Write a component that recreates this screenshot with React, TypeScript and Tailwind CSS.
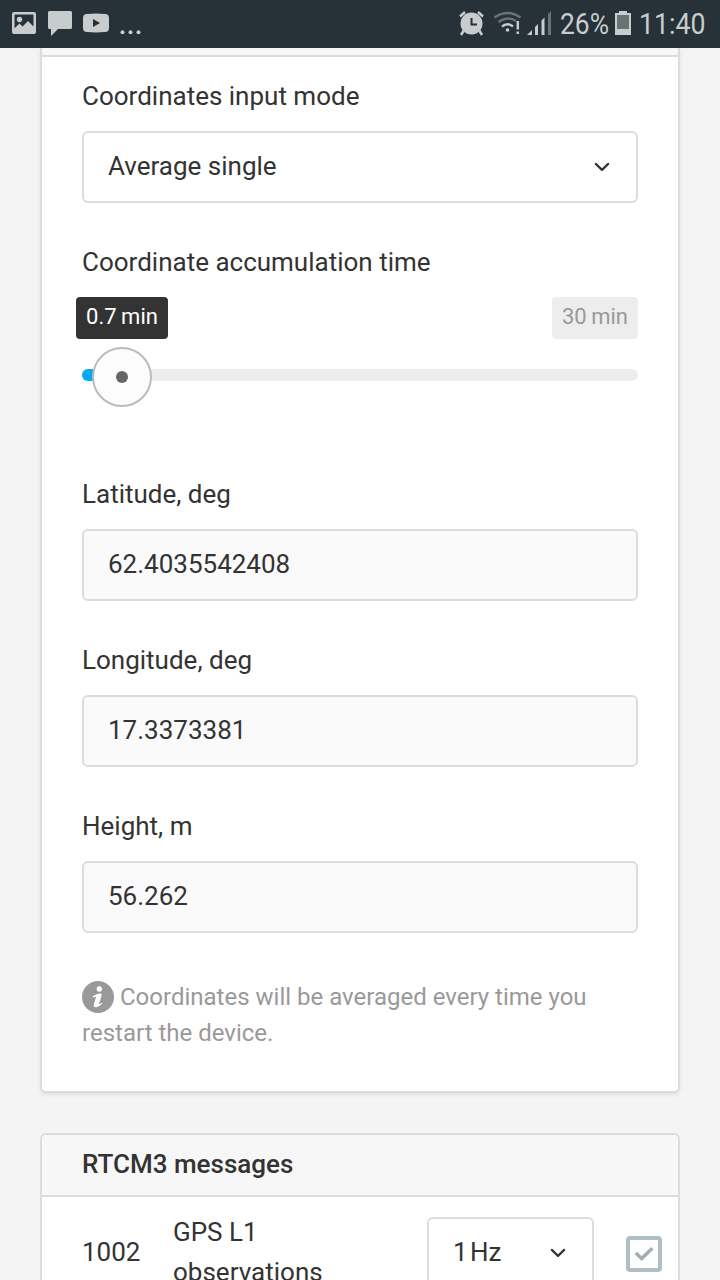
import type { ReactNode } from "react";

function Chevron() {
  return (
    <svg width="16" height="10" viewBox="0 0 16 10" fill="none" stroke="#333" strokeWidth="2.2" strokeLinecap="round" strokeLinejoin="round">
      <path d="M1.8 1.9 8 7.900l6.200-6" />
    </svg>
  );
}

function StatusBar() {
  return (
    <header className="flex h-12 shrink-0 items-center bg-[#263238] text-[#c8cccd]">
      <svg width="150" height="48" viewBox="0 0 150 48" fill="#c8cccd">
        <path fillRule="evenodd" d="M14 12h20a2 2 0 0 1 2 2v18a2 2 0 0 1-2 2H14a2 2 0 0 1-2-2V14a2 2 0 0 1 2-2Zm.5 2.500v13.800l5-4.800 3 3 5.500-5.500 5.500 5.500V14.500Z" />
        <circle cx="19.500" cy="19.500" r="2.700" />
        <path d="M49.500 11h21a1.500 1.500 0 0 1 1.500 1.500v15a1.500 1.500 0 0 1-1.500 1.500H58l-7 7v-7h-1.500a1.500 1.500 0 0 1-1.500-1.500v-15a1.500 1.500 0 0 1 1.500-1.500Z" />
        <path fillRule="evenodd" d="M87 14q9-.8 18 0 4 .2 4 4v10q0 3.800-4 4-9 .8-18 0-4-.2-4-4V18q0-3.800 4-4Zm6 5v8l7-4Z" />
        <circle cx="122.500" cy="32.300" r="2" />
        <circle cx="130.500" cy="32.300" r="2" />
        <circle cx="138.500" cy="32.300" r="2" />
      </svg>
      <svg className="ml-auto" width="100" height="48" viewBox="456 0 100 48" fill="none">
        <path d="m464 30-3 5M479 30l3 5M460 16.500l5-4.500M483 16.500l-5-4.500" stroke="#c8cccd" strokeWidth="2.500" />
        <circle cx="471.500" cy="23.500" r="11" fill="#c8cccd" />
        <path d="M471.500 18v6.500h5.500" stroke="#263238" strokeWidth="2" />
        <g strokeWidth="2.300">
          <path d="M494.500 17.500q13-9 26 0M498.500 22q9-6.500 17.500-1" stroke="#687378" />
          <path d="M502 26.500q5.500-4.500 11 0" stroke="#c8cccd" />
          <path d="M517.800 21v8.500M517.800 31.500v2.500" stroke="#c8cccd" strokeWidth="2.500" />
        </g>
        <circle cx="507.500" cy="30" r="1.800" fill="#c8cccd" />
        <path d="m527 35 5-5v5ZM535 27l3-3v11h-3ZM541.500 20.500l3-3V35h-3Z" fill="#c8cccd" />
        <path d="m548 14 3-3v24h-3Z" fill="#687378" />
      </svg>
      <span className="flex w-[59px] items-center pb-px pl-[4px] text-[30px] leading-none">
        <span className="origin-left scale-x-[0.88]">26%</span>
      </span>
      <svg width="16" height="48" viewBox="615 0 16 48">
        <path d="M619 11h8v2h4v22h-16V13h4Z" fill="#c8cccd" />
        <path d="M617 15h12v14h-12Z" fill="#687378" />
      </svg>
      <span className="flex w-[89px] items-center pb-px pl-[8px] text-[30px] leading-none">
        <span className="origin-left scale-x-[0.89]">11:40</span>
      </span>
    </header>
  );
}

function Field({ label, children }: { label: string; children: ReactNode }) {
  return (
    <div>
      <div className="mb-3.5 h-10 leading-[38px]">{label}</div>
      {children}
    </div>
  );
}

function ReadOnly({ value }: { value: string }) {
  return (
    <div className="h-[72px] rounded-md border-2 border-[#dcdcdc] bg-[#fafafa] px-6 leading-[66px]">{value}</div>
  );
}

export default function App() {
  return (
    <div className="flex h-[1280px] w-[720px] flex-col overflow-hidden bg-[#f4f4f4] font-['Roboto',sans-serif] text-[26px] text-[#333]">
      <StatusBar />
      <main className="flex flex-col px-10">
        <section className="h-[1045px] shrink-0 rounded-b-md border-2 border-t-0 border-[#dcdcdc] bg-white shadow-[0_2px_4px_rgba(0,0,0,0.08)]">
          <div className="h-[9px] border-b-2 border-[#dcdcdc] bg-[#f7f7f7]" />
          <div className="flex flex-col gap-10 px-10 pt-5">
            <Field label="Coordinates input mode">
              <div className="flex h-[72px] items-center justify-between rounded-md border-2 border-[#dcdcdc] pl-6 pr-[26px]">
                <span className="pb-0.5 leading-10">Average single</span>
                <Chevron />
              </div>
            </Field>
            <div className="h-48">
              <div className="h-10 leading-[38px]">Coordinate accumulation time</div>
              <div className="-ml-1.5 mt-3.5 flex h-[42px] justify-between text-[22px] leading-[40px] [word-spacing:-1px]">
                <span className="w-[92px] rounded bg-[#333] text-center text-white">0.7 min</span>
                <span className="w-[86px] rounded bg-[#ededed] text-center text-[#999]">30 min</span>
              </div>
              <div className="relative mt-[30px] h-3 rounded-full bg-[#ededed]">
                <div className="h-3 w-10 rounded-full bg-[#03a9f4]" />
                <div className="absolute -top-[22px] left-[10px] flex size-[60px] items-center justify-center rounded-full border-2 border-[#bbb] bg-[#fcfcfc]">
                  <span className="size-3 rounded-full bg-[#666]" />
                </div>
              </div>
            </div>
            <Field label="Latitude, deg"><ReadOnly value="62.4035542408" /></Field>
            <Field label="Longitude, deg"><ReadOnly value="17.3373381" /></Field>
            <Field label="Height, m"><ReadOnly value="56.262" /></Field>
            <p className="mt-1.5 text-[24px] leading-9 text-[#999]">
              <svg className="mr-1.5 inline-block align-[-8px]" width="32" height="32" viewBox="0 0 32 32">
                <circle cx="16" cy="16" r="16" fill="#999" />
                <circle cx="17.300" cy="8" r="2.700" fill="#fff" />
                <path d="M10.500 15.500c3-1.700 5.500-3 7.800-3 1.300 0 1.700.9 1.300 2.100l-2.400 7.700c-.3 1 .3 1.200 2.800-.6l.4.8c-2.500 2.400-4.700 3.700-6.600 3.700-1.900 0-2.500-1.200-2-3l2.100-6.700c.3-1-.4-1-3-.1Z" fill="#fff" />
              </svg>
              Coordinates will be averaged every time you restart the device.
            </p>
          </div>
        </section>
        <section className="mt-10 h-[220px] shrink-0 rounded-t-md border-2 border-[#dcdcdc] bg-white">
          <h2 className="h-[62px] rounded-t border-b-2 border-[#dcdcdc] bg-[#f7f7f7] px-10 text-[26px] font-medium leading-[58px]">RTCM3 messages</h2>
          <div className="flex pl-10 pr-4 pt-4">
            <span className="w-[91px] shrink-0 leading-[78px]">1002</span>
            <span className="-mt-px w-[254px] shrink-0 leading-10">GPS L1<br />observations</span>
            <div className="mt-1 flex h-[72px] w-[167px] shrink-0 items-center justify-between rounded-md border-2 border-[#dcdcdc] pl-6 pr-[26px]">
              <span className="pb-0.5 [word-spacing:-4px]">1 Hz</span>
              <Chevron />
            </div>
            <div className="ml-8 mt-[23px] flex size-9 shrink-0 items-center justify-center rounded-[4px] border-4 border-[#b0bec5]">
              <svg width="20" height="16" viewBox="0 0 20 16" fill="none" stroke="#a3adb1" strokeWidth="3.500">
                <path d="m1.800 7 5.900 5.500L18.300 2.200" />
              </svg>
            </div>
          </div>
        </section>
      </main>
    </div>
  );
}
